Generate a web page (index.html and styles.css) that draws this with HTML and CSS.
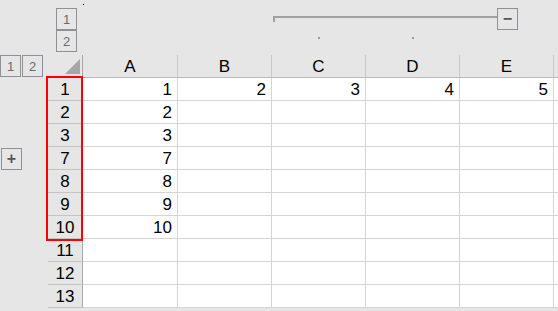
FILE: index.html
```html
<!DOCTYPE html>
<html lang="ja">
<head>
    <meta charset="UTF-8">
    <title>Sheet - grouped rows</title>
    <link rel="stylesheet" href="styles.css">
</head>
<body>
    <!-- outline controls above the sheet -->
    <div class="outline-top">
        <div class="levels-v">
            <span class="lvl">1</span>
            <span class="lvl">2</span>
        </div>
        <span class="tick"></span>
        <div class="group-bar">
            <span class="bracket"></span>
            <span class="lvl toggle">&minus;</span>
        </div>
        <span class="dot dot-c"></span>
        <span class="dot dot-d"></span>
    </div>

    <div class="sheet">
        <!-- column header row -->
        <div class="levels-h">
            <span class="lvl">1</span>
            <span class="lvl">2</span>
        </div>
        <div class="corner"><span class="tri"></span></div>
        <div class="col-head">A</div>
        <div class="col-head">B</div>
        <div class="col-head">C</div>
        <div class="col-head">D</div>
        <div class="col-head">E</div>
        <div class="col-head last"></div>

        <!-- rows -->
        <div class="gutter"></div><div class="row-head">1</div><div class="cell">1</div><div class="cell">2</div><div class="cell">3</div><div class="cell">4</div><div class="cell">5</div><div class="cell"></div>
        <div class="gutter"></div><div class="row-head">2</div><div class="cell">2</div><div class="cell"></div><div class="cell"></div><div class="cell"></div><div class="cell"></div><div class="cell"></div>
        <div class="gutter"></div><div class="row-head">3</div><div class="cell">3</div><div class="cell"></div><div class="cell"></div><div class="cell"></div><div class="cell"></div><div class="cell"></div>
        <div class="gutter"><span class="lvl expand">+</span></div><div class="row-head">7</div><div class="cell">7</div><div class="cell"></div><div class="cell"></div><div class="cell"></div><div class="cell"></div><div class="cell"></div>
        <div class="gutter"></div><div class="row-head">8</div><div class="cell">8</div><div class="cell"></div><div class="cell"></div><div class="cell"></div><div class="cell"></div><div class="cell"></div>
        <div class="gutter"></div><div class="row-head">9</div><div class="cell">9</div><div class="cell"></div><div class="cell"></div><div class="cell"></div><div class="cell"></div><div class="cell"></div>
        <div class="gutter"></div><div class="row-head">10</div><div class="cell">10</div><div class="cell"></div><div class="cell"></div><div class="cell"></div><div class="cell"></div><div class="cell"></div>
        <div class="gutter"></div><div class="row-head">11</div><div class="cell"></div><div class="cell"></div><div class="cell"></div><div class="cell"></div><div class="cell"></div><div class="cell"></div>
        <div class="gutter"></div><div class="row-head">12</div><div class="cell"></div><div class="cell"></div><div class="cell"></div><div class="cell"></div><div class="cell"></div><div class="cell"></div>
        <div class="gutter"></div><div class="row-head">13</div><div class="cell"></div><div class="cell"></div><div class="cell"></div><div class="cell"></div><div class="cell"></div><div class="cell"></div>

        <!-- selection highlight over row headers 1-10 -->
        <div class="highlight"></div>
    </div>
</body>
</html>
```

FILE: styles.css
```css
/* Global */
* {
    box-sizing: border-box;
    margin: 0;
    padding: 0;
}
body {
    width: 558px;
    height: 311px;
    overflow: hidden;
    background: #e6e6e6;
    font-family: 'Liberation Sans', Arial, sans-serif;
    color: #000;
}
.outline-top,
.sheet {
    display: grid;
    grid-template-columns: 48px 35px 95px 94px 94px 94px 94px 1fr;
}
.outline-top {
    height: 55px;
}
.sheet {
    position: relative;
    grid-auto-rows: 23px;
}
/* Outline buttons */
.lvl {
    display: flex;
    align-items: center;
    justify-content: center;
    width: 21px;
    height: 22px;
    border: 1px solid #8d9096;
    color: #6a6a6a;
    font-size: 13px;
    background: #e6e6e6;
}
.levels-v {
    grid-column: 2;
    grid-row: 1;
    display: flex;
    flex-direction: column;
    align-items: center;
    padding-top: 8px;
    margin-left: 2px;
}
.levels-h {
    display: flex;
    gap: 1px;
}
.tick {
    grid-column: 3;
    grid-row: 1;
    width: 1px;
    height: 1px;
    margin-top: 4px;
    background: #000;
}
.group-bar {
    grid-column: 5 / 8;
    grid-row: 1;
    display: flex;
    align-items: flex-start;
    padding: 8px 36px 0 1px;
}
.bracket {
    flex: 1;
    height: 6px;
    margin-top: 8px;
    border-top: 2px solid #a0a0a0;
    border-left: 2px solid #a0a0a0;
}
.toggle {
    font-size: 16px;
    font-weight: bold;
    color: #555;
}
.dot {
    grid-row: 1;
    justify-self: center;
    align-self: start;
    width: 2px;
    height: 2px;
    margin-top: 37px;
    background: #9a9a9a;
}
.dot-c { grid-column: 5; }
.dot-d { grid-column: 6; }
.gutter {
    display: flex;
    align-items: flex-start;
}
.expand {
    margin: 1px 0 0 1px;
    font-size: 16px;
    font-weight: bold;
    color: #555;
}
/* Headers */
.corner {
    border-right: 1px solid #a8a8a8;
    border-bottom: 1px solid #b8b8b8;
    display: flex;
    justify-content: flex-end;
    align-items: flex-end;
    padding: 0 2px 3px 0;
}
.tri {
    width: 15px;
    height: 15px;
    background: #a6a6a6;
    clip-path: polygon(100% 0, 100% 100%, 0 100%);
}
.col-head {
    border-right: 1px solid #c8c8c8;
    border-bottom: 1px solid #b8b8b8;
    text-align: center;
    font-size: 17px;
    line-height: 23px;
}
.col-head.last { border-right: none; }
.row-head {
    border-right: 1px solid #a8a8a8;
    border-bottom: 1px solid #c4c4c4;
    text-align: center;
    font-size: 17px;
    line-height: 23px;
}
/* Cells */
.cell {
    background: #fff;
    border-right: 1px solid #d4d4d4;
    border-bottom: 1px solid #d4d4d4;
    text-align: right;
    padding-right: 5px;
    font-size: 17px;
    line-height: 23px;
}
/* Selection box */
.highlight {
    position: absolute;
    grid-column: 2 / 3;
    grid-row: 2 / 9;
    top: -2px;
    bottom: -2px;
    left: -2px;
    right: 0;
    border: 2px solid #ff0000;
}
```
